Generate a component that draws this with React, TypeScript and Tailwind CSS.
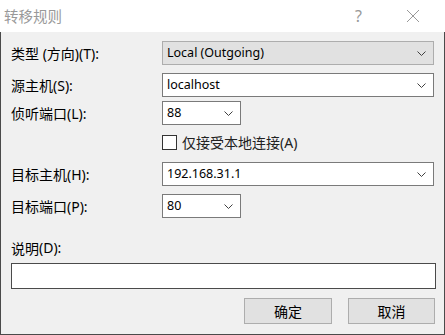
import React from "react";

const font = { fontFamily: '"Segoe UI", "Noto Sans", "Noto Sans CJK SC", sans-serif' };

function T({ s }: { s: string }) {
  const parts = s.split(/([\u4e00-\u9fff]+)/).filter((p) => p.length > 0);
  return (
    <>
      {parts.map((p, i) =>
        /[\u4e00-\u9fff]/.test(p) ? (
          <span key={i} style={{ fontFamily: '"Noto Sans CJK SC", sans-serif' }}>
            {p}
          </span>
        ) : (
          <span key={i}>{p}</span>
        )
      )}
    </>
  );
}

function Chevron() {
  return (
    <svg width="9" height="5" viewBox="0 0 9 5" className="shrink-0">
      <path d="M0.5 0.5 L4.5 4.5 L8.5 0.5" fill="none" stroke="#404040" strokeWidth="1" />
    </svg>
  );
}

function Combo({ text, w, gray }: { text: string; w: string; gray?: boolean }) {
  return (
    <div
      className={`${w} h-[24px] flex items-center justify-between pl-[4px] pr-[7px] border ${
        gray ? "bg-[#e1e1e1] border-[#adadad]" : "bg-white border-[#7a7a7a]"
      } text-black text-[12.5px]`}
    >
      <span>{text}</span>
      <Chevron />
    </div>
  );
}

export default function App() {
  return (
    <div style={font} className="w-[445px] h-[335px] flex flex-col text-[14px] leading-none text-black">
      <div className="h-[32px] bg-white flex items-center shrink-0">
        <span className="pl-[4px] text-[14.5px] text-[#999999]" style={{ fontFamily: '"Noto Sans CJK SC", sans-serif' }}>
          转移规则
        </span>
        <span className="ml-auto mr-[44px] text-[16px] text-[#999999]">?</span>
        <svg width="14" height="14" viewBox="0 0 14 14" className="mr-[25px]">
          <path d="M1 1 L13 13 M13 1 L1 13" stroke="#999999" strokeWidth="1" />
        </svg>
      </div>
      <div className="flex-1 bg-[#f0f0f0] border-l border-r border-b border-[#4a4a4a] flex flex-col pl-[10px] pr-[9px]">
        <div className="mt-[9px] flex items-center">
          <span className="w-[151px]"><T s="类型 (方向)(T):" /></span>
          <Combo text="Local (Outgoing)" w="w-[272px]" gray />
        </div>
        <div className="mt-[8px] flex items-center">
          <span className="w-[151px]"><T s="源主机(S):" /></span>
          <Combo text="localhost" w="w-[272px]" />
        </div>
        <div className="mt-[4px] flex items-center">
          <span className="w-[151px]"><T s="侦听端口(L):" /></span>
          <Combo text="88" w="w-[79px]" />
        </div>
        <div className="mt-[9px] h-[16px] flex items-center pl-[151px]">
          <div className="w-[15px] h-[15px] bg-white border border-[#333333]" />
          <span className="ml-[5px] text-[#222222]"><T s="仅接受本地连接(A)" /></span>
        </div>
        <div className="mt-[12px] flex items-center">
          <span className="w-[151px]"><T s="目标主机(H):" /></span>
          <Combo text="192.168.31.1" w="w-[272px]" />
        </div>
        <div className="mt-[8px] flex items-center">
          <span className="w-[151px]"><T s="目标端口(P):" /></span>
          <Combo text="80" w="w-[79px]" />
        </div>
        <div className="mt-[23px] h-[14px] flex items-center"><T s="说明(D):" /></div>
        <div className="mt-[8px] w-[425px] h-[26px] bg-white border border-[#4a4a4a]" />
        <div className="mt-[9px] flex justify-end gap-[16px]">
          <div className="w-[88px] h-[26px] bg-[#e1e1e1] border border-[#adadad] flex items-center justify-center"><T s="确定" /></div>
          <div className="w-[87px] h-[26px] bg-[#e1e1e1] border border-[#adadad] flex items-center justify-center"><T s="取消" /></div>
        </div>
      </div>
    </div>
  );
}
